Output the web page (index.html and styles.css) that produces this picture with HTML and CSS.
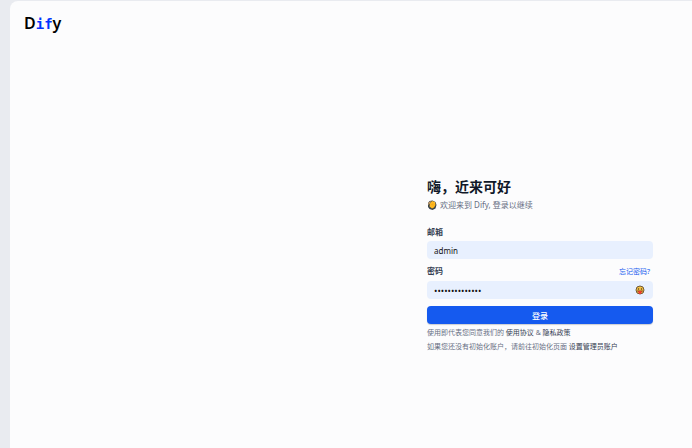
FILE: index.html
```html
<!DOCTYPE html>
<html lang="zh-CN">
<head>
    <meta charset="UTF-8">
    <meta name="viewport" content="width=device-width, initial-scale=1.0">
    <title>Dify</title>
    <link rel="stylesheet" href="styles.css">
</head>
<body>
    <div class="page">
        <header class="header">
            <a href="#" class="logo">D<span class="logo-if">if</span>y</a>
        </header>
        <main class="main">
            <form class="login-form">
                <h1>嗨，近来可好</h1>
                <p class="welcome">
                    <svg class="wave" viewBox="0 0 20 20" aria-hidden="true">
                        <path d="M2 6l3-4 6-1 6 3 2 6-2 7-6 3-6-2-3-4z" fill="#39434b"/>
                        <path d="M6 7l4-5 6 2 1 6-3 5-4 2-5-4z" fill="#ffb91f"/>
                        <path d="M3 5l4-3 1 2-3 4-3 2z" fill="#c9a06a"/>
                        <path d="M9 8l3 3M12 7l2 2" stroke="#d98a10" stroke-width="1"/>
                    </svg>
                    <span>欢迎来到 Dify, 登录以继续</span>
                </p>

                <label for="email" class="label">邮箱</label>
                <input type="text" id="email" class="input" value="admin">

                <div class="label-row">
                    <label for="password" class="label">密码</label>
                    <a href="#" class="forgot">忘记密码?</a>
                </div>
                <div class="password-box">
                    <input type="password" id="password" class="input" value="12345678901234">
                    <button type="button" class="eye-btn" aria-label="显示密码">
                        <svg viewBox="0 0 20 20">
                            <circle cx="10" cy="10" r="8" fill="#f9c440" stroke="#6e5a3c" stroke-width="2"/>
                            <circle cx="7" cy="8" r="1.5" fill="#4b3a28"/>
                            <circle cx="13" cy="8" r="1.5" fill="#4b3a28"/>
                            <path d="M4 11h12c0 2-2 3-6 3s-6-1-6-3z" fill="#8a4a22"/>
                            <path d="M7 12h6v3a3 3 0 0 1-6 0z" fill="#f0392f"/>
                        </svg>
                    </button>
                </div>

                <button type="submit" class="login-btn">登录</button>

                <p class="note">使用即代表您同意我们的 <a href="#">使用协议</a> &amp; <a href="#">隐私政策</a></p>
                <p class="note">如果您还没有初始化账户，请前往初始化页面 <a href="#">设置管理员账户</a></p>
            </form>
        </main>
    </div>
</body>
</html>
```

FILE: styles.css
```css
* {
    box-sizing: border-box;
}

body {
    margin: 0;
    padding: 1px 0 0 10px;
    height: 100vh;
    background-color: #e9ebf0;
    font-family: "Noto Sans", "Noto Sans CJK SC", sans-serif;
    font-size: 8px;
    color: #354052;
}

h1, p {
    margin: 0;
}

a {
    text-decoration: none;
}

.page {
    display: flex;
    flex-direction: column;
    height: 100%;
    background-color: #fcfcfd;
    border-top-left-radius: 8px;
}

.header {
    padding: 11px 14px 0;
}

.logo {
    display: inline-block;
    font-family: "Noto Sans", sans-serif;
    font-size: 16px;
    line-height: 22px;
    font-weight: 600;
    color: #000;
}

.logo-if {
    font-family: "DejaVu Sans Mono", monospace;
    font-size: 14px;
    font-weight: bold;
    color: #0033ff;
}

.main {
    flex: 1;
    display: flex;
    justify-content: flex-end;
    align-items: center;
    padding: 48px 39px 0 0;
}

.login-form {
    display: flex;
    flex-direction: column;
    width: 33%;
    min-width: 226px;
}

h1 {
    font-size: 14px;
    line-height: 20px;
    font-weight: bold;
    color: #101828;
}

.welcome {
    display: flex;
    align-items: center;
    gap: 3px;
    margin-bottom: 12px;
    line-height: 16px;
    color: #676f83;
}

.wave {
    width: 10px;
    height: 10px;
}

.label {
    line-height: 14px;
    font-weight: bold;
}

.input {
    width: 100%;
    height: 18px;
    margin: 2px 0 5px;
    padding: 0 7px;
    border: none;
    border-radius: 4px;
    background-color: #e8f0fe;
    font-family: inherit;
    font-size: 8px;
    color: #131313;
}

.label-row {
    display: flex;
    justify-content: space-between;
    align-items: center;
    padding-right: 3px;
}

.forgot {
    font-size: 7px;
    color: #155aef;
}

.password-box {
    position: relative;
    display: flex;
}

.password-box .input {
    margin: 3px 0 7px;
    font-size: 9px;
}

/* sits over the password field */
.eye-btn {
    position: absolute;
    top: 7px;
    right: 8px;
    width: 10px;
    height: 10px;
    padding: 0;
    border: none;
    background: none;
    cursor: pointer;
}

.eye-btn svg {
    display: block;
}

.login-btn {
    height: 18px;
    margin-bottom: 2px;
    padding: 0;
    border: none;
    border-radius: 4px;
    background-color: #155aef;
    box-shadow: 0 1px 1px rgba(16, 24, 40, 0.2);
    font-family: inherit;
    font-size: 8px;
    font-weight: 500;
    color: #fff;
    cursor: pointer;
}

.note {
    font-size: 7px;
    line-height: 14px;
    color: #676f83;
    white-space: nowrap;
}

.note a {
    color: #354052;
}
```
